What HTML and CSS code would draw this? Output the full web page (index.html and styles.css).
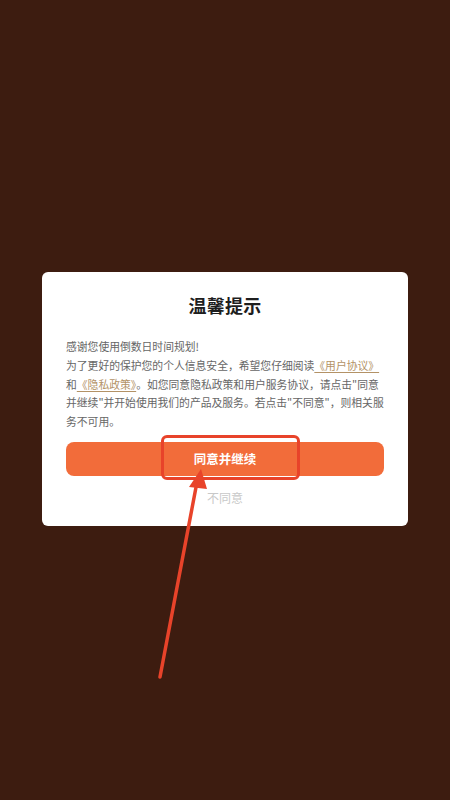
FILE: index.html
```html
<!DOCTYPE html>
<html lang="zh">
<head>
<meta charset="utf-8">
<link rel="stylesheet" href="styles.css">
</head>
<body>
<div class="screen">
  <div class="dialog">
    <h1 class="title">温馨提示</h1>
    <p class="body">感谢您使用倒数日时间规划!<br>为了更好的保护您的个人信息安全，希望您仔细阅读<a class="link">《用户协议》</a><br>和<a class="link">《隐私政策》</a>。如您同意隐私政策和用户服务协议，请点击"同意<br>并继续"并开始使用我们的产品及服务。若点击"不同意"，则相关服<br>务不可用。</p>
    <div class="actions">
      <button class="agree">同意并继续</button>
      <button class="disagree">不同意</button>
    </div>
  </div>
  <div class="highlight"></div>
  <svg class="arrow" width="450" height="800" viewBox="0 0 450 800">
    <line x1="160" y1="677" x2="197" y2="482" stroke="#e8432a" stroke-width="3.5" stroke-linecap="round"/>
    <polygon points="201,469 189,487 207,489" fill="#e8432a"/>
  </svg>
</div>
</body>
</html>
```
FILE: styles.css
```css
html, body {
  margin: 0;
  padding: 0;
}
body {
  width: 450px;
  height: 800px;
  background: #3d1c10;
  font-family: "Noto Sans CJK SC", "Noto Sans", sans-serif;
}
.screen {
  position: relative;
  width: 450px;
  height: 800px;
  display: flex;
  align-items: flex-start;
  justify-content: center;
  padding-top: 272px;
  box-sizing: border-box;
}
.dialog {
  width: 366px;
  height: 254px;
  background: #fff;
  border-radius: 6px;
  box-sizing: border-box;
  padding: 0 24px;
  display: flex;
  flex-direction: column;
}
.title {
  margin: 20px 0 0;
  text-align: center;
  font-size: 18px;
  line-height: 26px;
  font-weight: 700;
  color: #1e1e1e;
  letter-spacing: 0.3px;
}
.body {
  margin: 19px 0 0;
  font-size: 10.8px;
  line-height: 18.75px;
  color: #666;
  white-space: nowrap;
}
.link {
  color: #b39266;
  text-decoration: underline;
  text-underline-offset: 2px;
}
.actions {
  margin-top: 11px;
  display: flex;
  flex-direction: column;
  align-items: stretch;
}
.agree {
  height: 34px;
  border: none;
  border-radius: 8px;
  background: #f26c3a;
  color: #fff;
  font-family: inherit;
  font-size: 12.5px;
  font-weight: 700;
  padding: 0;
}
.disagree {
  margin-top: 13px;
  border: none;
  background: none;
  color: #c8c8c8;
  font-family: inherit;
  font-size: 12px;
  line-height: 18px;
  padding: 0;
}
.highlight {
  position: absolute;
  left: 161px;
  top: 435px;
  width: 139px;
  height: 45px;
  box-sizing: border-box;
  border: 3px solid #e8432a;
  border-radius: 6px;
}
.arrow {
  position: absolute;
  left: 0;
  top: 0;
}
```
